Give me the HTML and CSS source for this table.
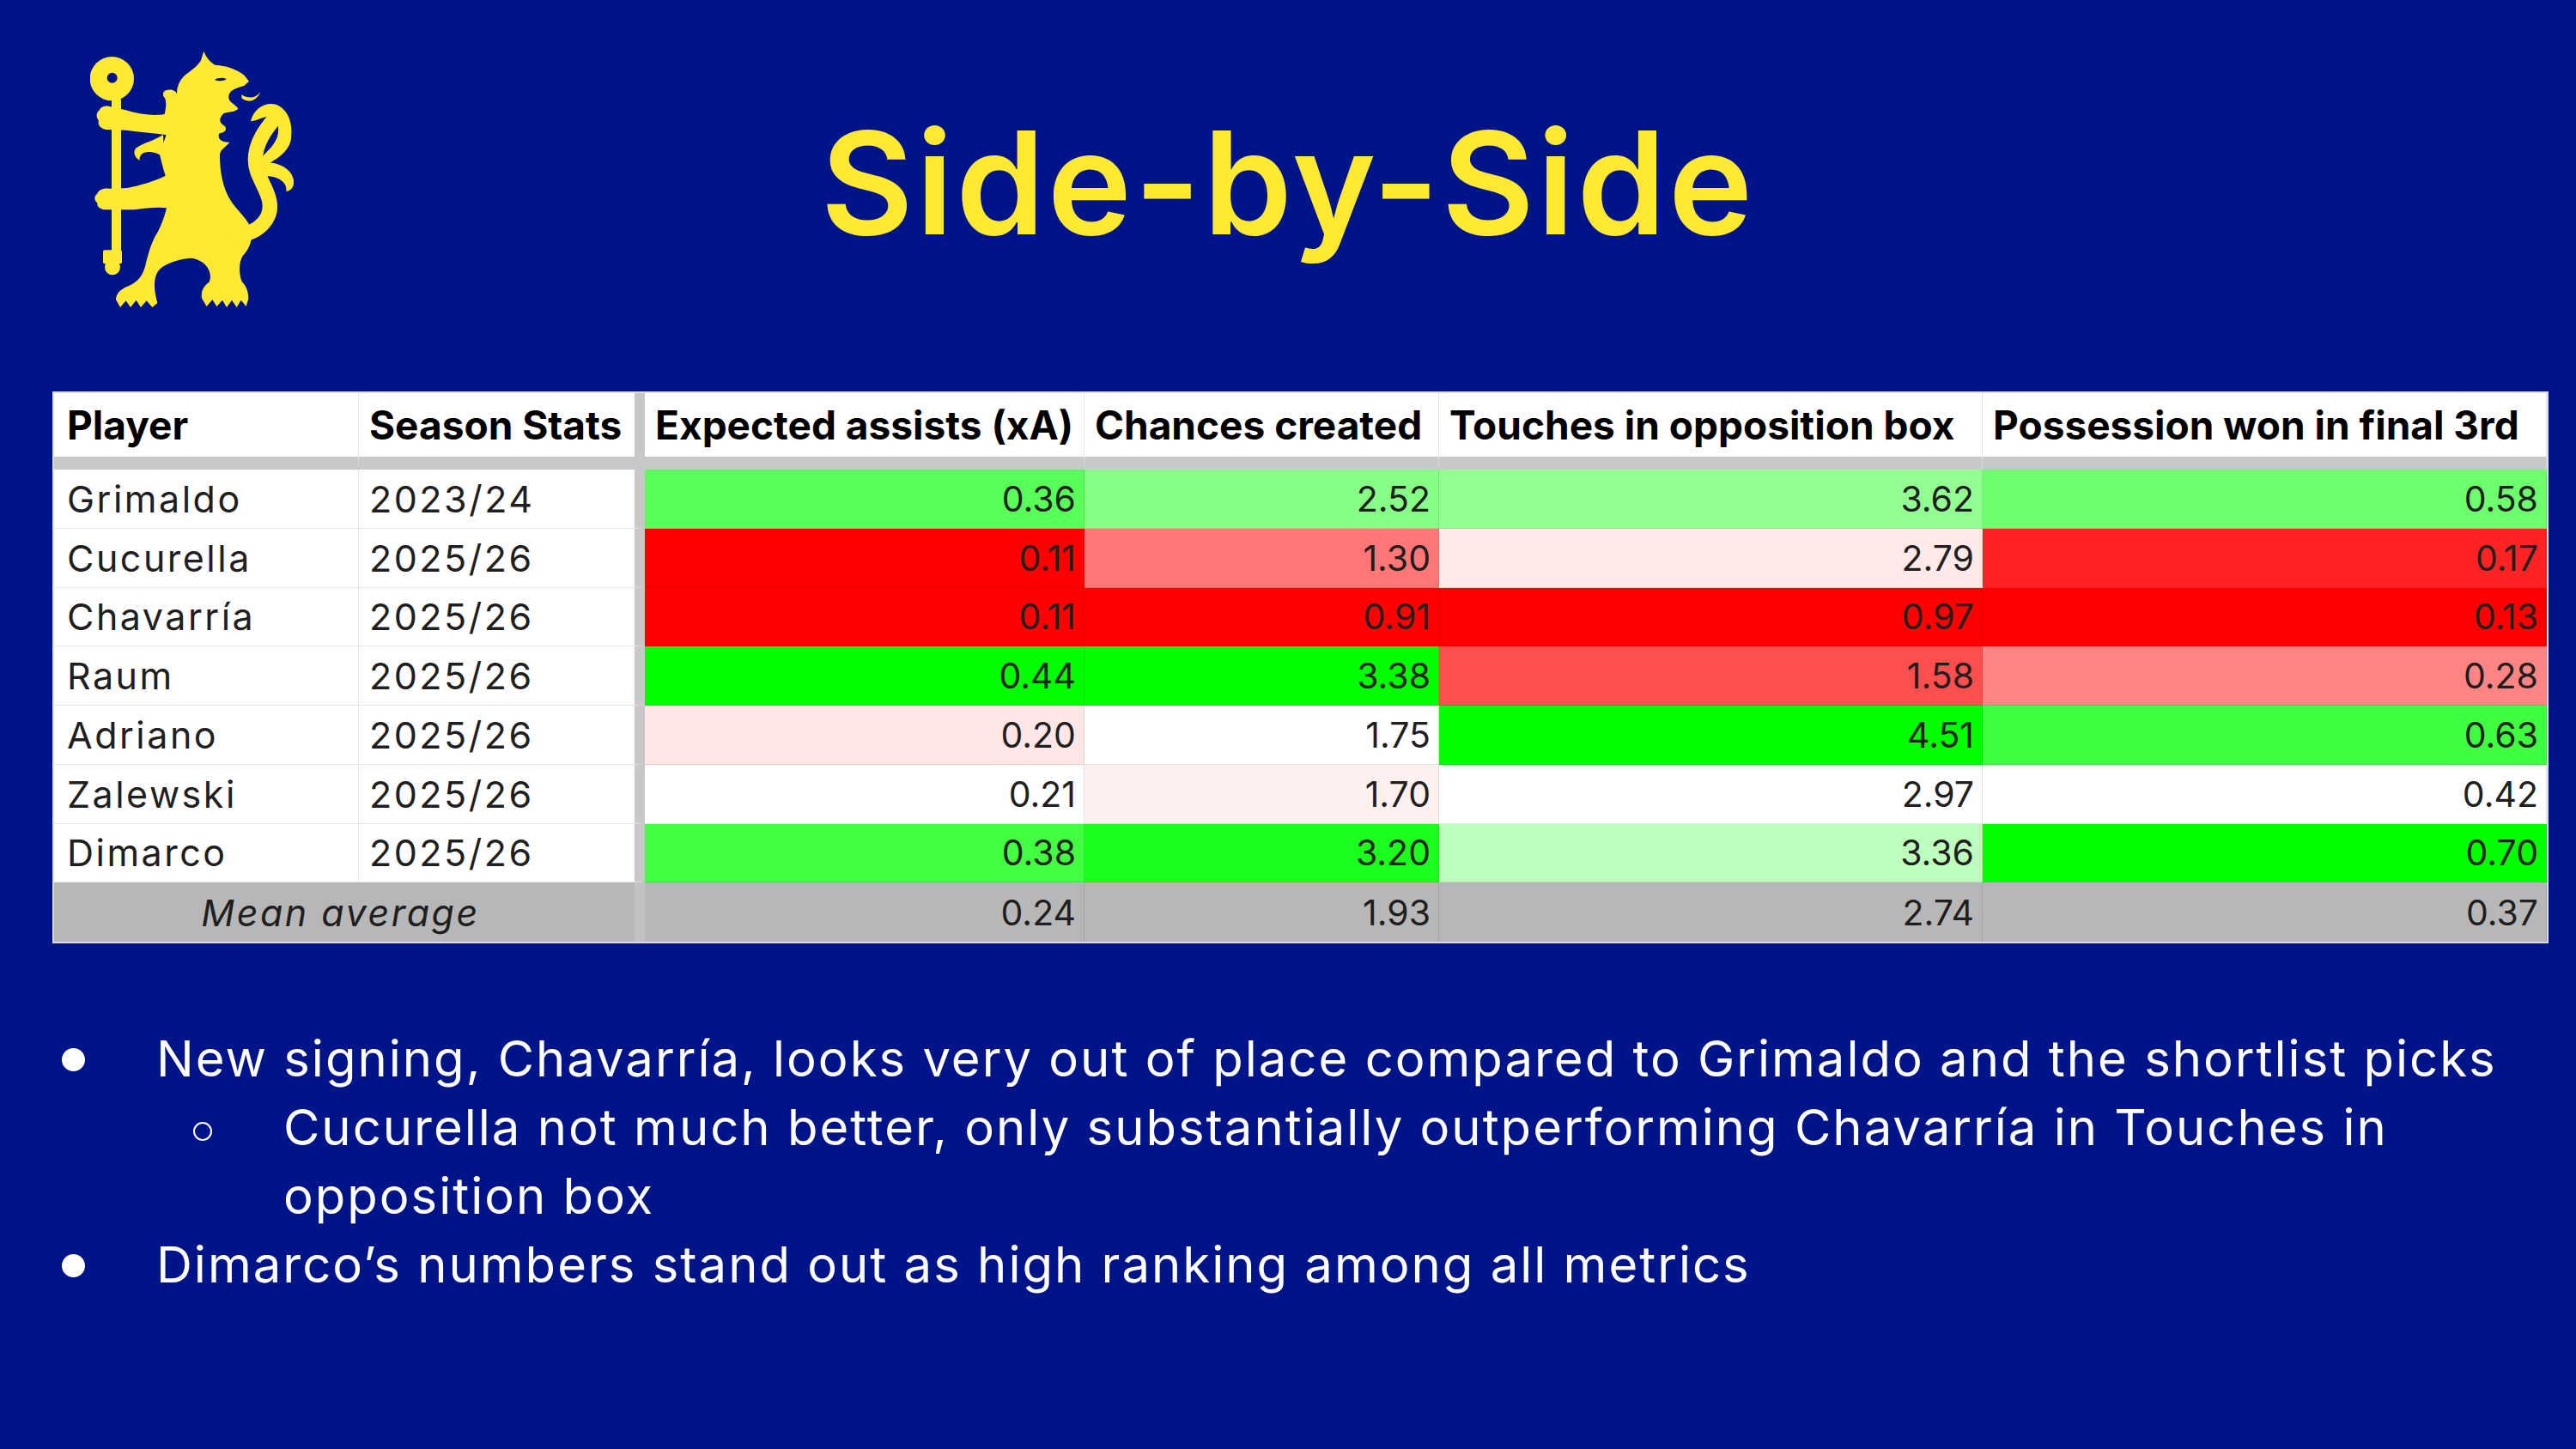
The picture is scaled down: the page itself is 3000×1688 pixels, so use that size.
FILE: index.html
```html
<!DOCTYPE html>
<html lang="en">
<head>
<meta charset="utf-8">
<title>Side-by-Side</title>
<link rel="stylesheet" href="styles.css">
</head>
<body>
<div class="slide">
  <header class="header">
    <svg class="logo" viewBox="75 55 711 906" width="237" height="302" aria-label="Chelsea lion">
      <g fill="#ffe933">
        <!-- staff -->
        <circle cx="151" cy="156" r="77"/>
        <rect x="150" y="225" width="33" height="545" rx="6"/>
        <rect x="120" y="755" width="66" height="48" rx="6"/>
        <circle cx="153" cy="815" r="27"/>
        <!-- body -->
        <path d="M472 60 C482 85 497 100 512 108 C552 110 592 125 614 145 L630 165 L614 180 C602 184 587 188 577 194 C562 202 554 215 562 232 C572 245 587 250 592 262 C577 274 557 272 542 277 C527 292 522 305 542 320 C557 330 547 345 527 347 C517 362 532 380 562 378 C547 397 530 402 528 422 C528 480 538 540 568 585 C588 615 618 640 633 670 C648 710 633 750 608 775 C593 800 595 840 605 865 C620 880 628 900 628 925 L620 952 L602 930 L587 955 L570 930 L552 955 L537 930 L517 952 L502 928 L482 952 L466 925 C460 905 470 880 490 868 C500 850 495 820 470 800 C450 785 430 780 410 785 C380 790 345 800 320 820 C305 835 300 855 300 880 C300 900 305 920 310 940 L292 955 L272 932 L252 955 L236 930 L216 955 L200 932 L180 955 L165 928 C165 905 185 890 210 880 C245 865 262 840 270 800 C280 760 292 720 312 690 C327 660 337 630 342 608 C312 604 270 608 230 614 L130 614 C110 614 98 602 100 590 C88 582 88 565 100 558 C105 545 120 538 140 540 L205 538 C250 528 300 515 338 495 C330 470 325 450 320 430 C315 400 335 380 340 352 C300 347 250 342 200 336 L130 334 C110 330 100 317 105 302 C95 292 95 275 108 265 C112 255 125 250 140 252 L200 266 C250 282 300 286 335 280 C340 258 342 240 337 225 C327 215 327 203 339 197 C356 190 373 197 378 208 C378 178 393 150 418 135 C440 120 455 105 462 92 Z"/>
        <!-- elbow tuft -->
        <path d="M330 352 C300 372 262 380 236 398 C224 410 228 430 248 442 C246 424 258 412 278 412 C300 412 318 420 334 432 Z"/>
        <!-- tongue -->
        <path d="M604 224 C626 242 656 236 670 202 C654 224 630 228 604 212 Z"/>
        <!-- tail -->
        <path d="M585 705 C670 695 715 640 700 578 C688 528 652 492 652 440 C652 380 690 330 722 292" fill="none" stroke="#ffe933" stroke-width="52" stroke-linecap="round"/>
        <path d="M636 305 C646 258 690 236 724 246 C766 262 786 310 776 372 C766 414 726 436 694 456 L660 444 C692 412 728 384 732 344 C736 304 714 284 690 289 C670 294 652 304 636 305 Z"/>
        <path d="M676 448 C730 446 778 468 786 510 C789 532 778 548 760 550 C764 520 738 498 690 496 Z"/>
      </g>
      <g fill="#001489">
        <circle cx="152" cy="153" r="18"/>
        <path d="M510 160 C525 150 545 152 552 158 C540 165 525 166 510 160 Z"/>
      </g>
    </svg>
    <h1 class="title">Side-by-Side</h1>
  </header>

  <div class="table">
    <div class="cell th">Player</div>
    <div class="cell th season">Season Stats</div>
    <div class="cell th">Expected assists (xA)</div>
    <div class="cell th">Chances created</div>
    <div class="cell th">Touches in opposition box</div>
    <div class="cell th">Possession won in final 3rd</div>

    <div class="cell name">Grimaldo</div>
    <div class="cell name season">2023/24</div>
    <div class="cell num" style="background:rgb(89,255,89)">0.36</div>
    <div class="cell num" style="background:rgb(135,255,135)">2.52</div>
    <div class="cell num" style="background:rgb(147,255,147)">3.62</div>
    <div class="cell num" style="background:rgb(109,255,109)">0.58</div>

    <div class="cell name">Cucurella</div>
    <div class="cell name season">2025/26</div>
    <div class="cell num" style="background:rgb(255,0,0)">0.11</div>
    <div class="cell num" style="background:rgb(255,118,118)">1.30</div>
    <div class="cell num" style="background:rgb(255,232,232)">2.79</div>
    <div class="cell num" style="background:rgb(255,35,35)">0.17</div>

    <div class="cell name">Chavarría</div>
    <div class="cell name season">2025/26</div>
    <div class="cell num" style="background:rgb(255,0,0)">0.11</div>
    <div class="cell num" style="background:rgb(255,0,0)">0.91</div>
    <div class="cell num" style="background:rgb(255,0,0)">0.97</div>
    <div class="cell num" style="background:rgb(255,0,0)">0.13</div>

    <div class="cell name">Raum</div>
    <div class="cell name season">2025/26</div>
    <div class="cell num" style="background:rgb(0,255,0)">0.44</div>
    <div class="cell num" style="background:rgb(0,255,0)">3.38</div>
    <div class="cell num" style="background:rgb(255,78,78)">1.58</div>
    <div class="cell num" style="background:rgb(255,132,132)">0.28</div>

    <div class="cell name">Adriano</div>
    <div class="cell name season">2025/26</div>
    <div class="cell num" style="background:rgb(255,230,230)">0.20</div>
    <div class="cell num" style="background:rgb(255,255,255)">1.75</div>
    <div class="cell num" style="background:rgb(0,255,0)">4.51</div>
    <div class="cell num" style="background:rgb(64,255,64)">0.63</div>

    <div class="cell name">Zalewski</div>
    <div class="cell name season">2025/26</div>
    <div class="cell num" style="background:rgb(255,255,255)">0.21</div>
    <div class="cell num" style="background:rgb(255,240,240)">1.70</div>
    <div class="cell num" style="background:rgb(255,255,255)">2.97</div>
    <div class="cell num" style="background:rgb(255,255,255)">0.42</div>

    <div class="cell name">Dimarco</div>
    <div class="cell name season">2025/26</div>
    <div class="cell num" style="background:rgb(66,255,66)">0.38</div>
    <div class="cell num" style="background:rgb(28,255,28)">3.20</div>
    <div class="cell num" style="background:rgb(190,255,190)">3.36</div>
    <div class="cell num" style="background:rgb(0,255,0)">0.70</div>

    <div class="cell name mean mean-label">Mean average</div>
    <div class="cell num mean">0.24</div>
    <div class="cell num mean">1.93</div>
    <div class="cell num mean">2.74</div>
    <div class="cell num mean">0.37</div>
  </div>

  <ul class="notes">
    <li class="item"><span class="dot"></span><span class="txt">New signing, Chavarría, looks very out of place compared to Grimaldo and the shortlist picks</span></li>
    <li class="item sub"><span class="ring"></span><span class="txt">Cucurella not much better, only substantially outperforming Chavarría in Touches in<br>opposition box</span></li>
    <li class="item"><span class="dot"></span><span class="txt">Dimarco’s numbers stand out as high ranking among all metrics</span></li>
  </ul>
</div>
</body>
</html>
```
FILE: styles.css
```css
* { box-sizing: border-box; }
html, body { margin: 0; padding: 0; }
body {
  width: 3000px;
  height: 1688px;
  background: #001489;
  font-family: Inter, "Open Sans", sans-serif;
  overflow: hidden;
}
.slide {
  width: 3000px;
  height: 1688px;
  padding-top: 58px;
}
.header {
  display: grid;
  grid-template-columns: 1fr auto 1fr;
  height: 400px;
}
.logo {
  display: block;
  margin-left: 105px;
  justify-self: start;
}
.title {
  margin: 72px 0 0 0;
  font-size: 166px;
  line-height: 166px;
  font-weight: 600;
  color: #ffe933;
  letter-spacing: 3px;
  white-space: nowrap;
}
.table {
  display: grid;
  grid-template-columns: 355px 333px 512px 413px 633px 657px;
  grid-template-rows: 89px repeat(8, 68.75px);
  width: 2903px;
  margin-left: 63px;
  background: #ffffff;
  outline: 2px solid #dcdcdc;
}
.cell {
  display: flex;
  align-items: center;
  padding: 0 9px 0 15px;
  font-size: 41px;
  color: #1f1f1f;
  white-space: nowrap;
  border-right: 1px solid rgba(0, 0, 0, 0.1);
  border-bottom: 1px solid rgba(0, 0, 0, 0.1);
}
.name {
  font-size: 43px;
  letter-spacing: 2.5px;
}
.th {
  font-weight: 700;
  font-size: 46px;
  color: #000;
  padding-left: 12px;
  border-bottom: 15px solid #c8c8c8;
}
.th:first-child { padding-left: 15px; }
.season {
  padding-left: 12px;
  border-right: 12px solid #c8c8c8;
}
.num { justify-content: flex-end; padding-right: 9px; }
.mean { background: #b7b7b7; border-bottom: none; }
.mean-label {
  grid-column: span 2;
  justify-content: center;
  font-style: italic;
  padding-left: 0;
  border-right: 12px solid #c2c2c2;
}
.notes {
  list-style: none;
  margin: 96px 0 0 0;
  padding: 0 0 0 72px;
  color: #ffffff;
  font-size: 58px;
  line-height: 80px;
  letter-spacing: 2px;
}
.item {
  display: flex;
  align-items: flex-start;
  white-space: nowrap;
}
.dot {
  flex: none;
  width: 27px;
  height: 27px;
  border-radius: 50%;
  background: #ffffff;
  margin-top: 28px;
  margin-right: 83px;
}
.sub { padding-left: 153px; }
.ring {
  flex: none;
  width: 22px;
  height: 22px;
  border-radius: 50%;
  border: 2.5px solid #ffffff;
  margin-top: 34px;
  margin-right: 83px;
}
```
